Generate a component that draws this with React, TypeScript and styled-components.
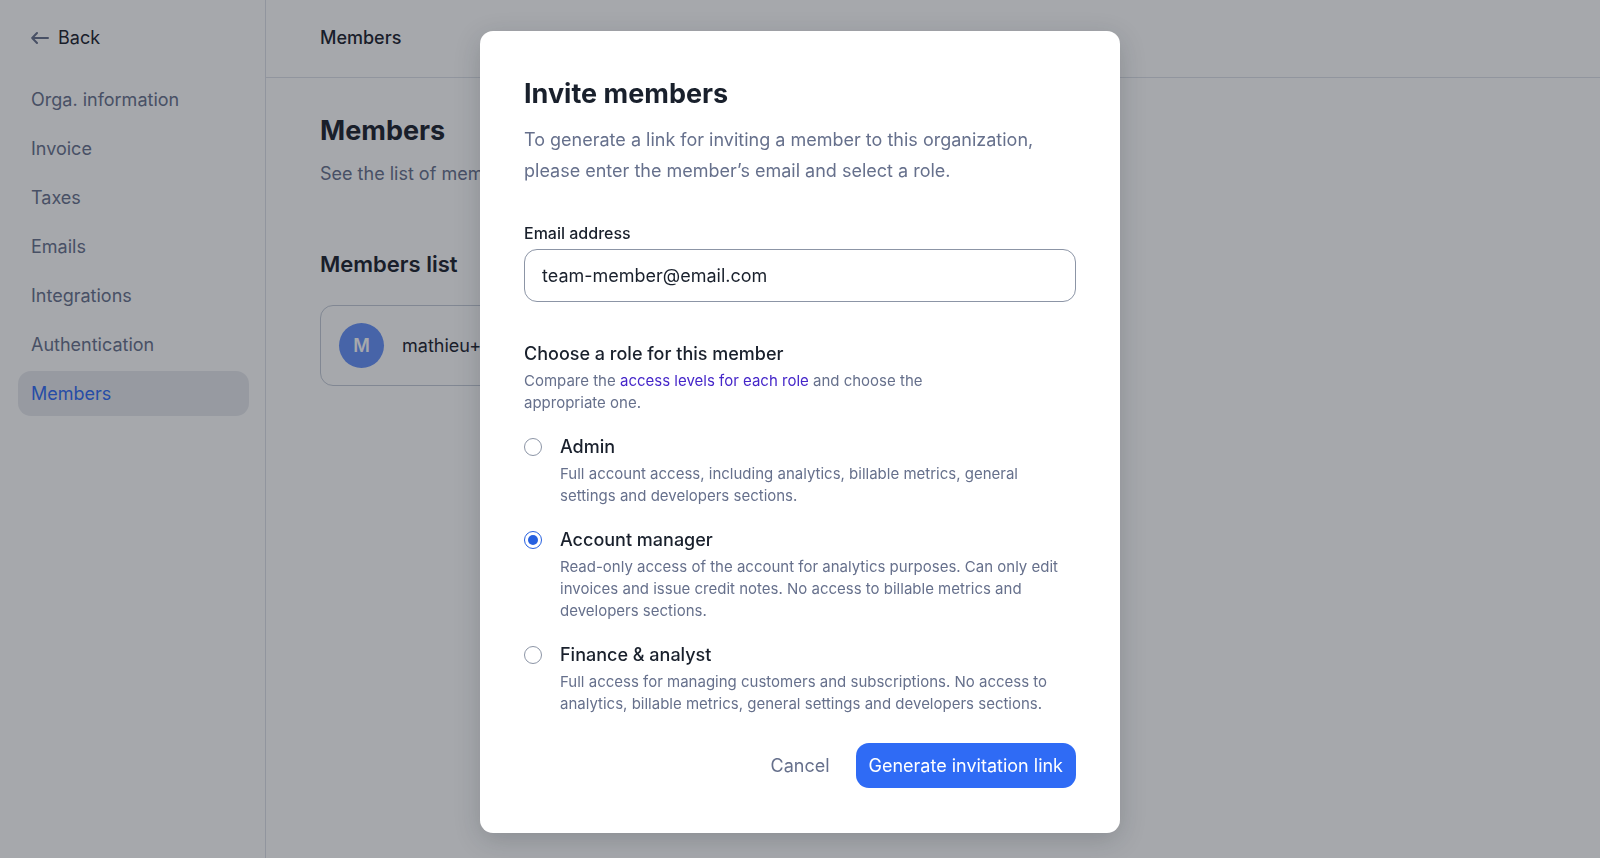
import React, { useState } from 'react';
import styled, { createGlobalStyle } from 'styled-components';

const color = {
  ink: '#19202c',
  muted: '#66708c',
  blue: '#2f6bf5',
  radio: '#2660e0',
  link: '#4526c9',
  line: '#dde1e8',
  field: '#8c95a6',
};

const GlobalStyle = createGlobalStyle`
  *, *::before, *::after { box-sizing: border-box; }
  body {
    margin: 0;
    background: #fff;
    color: ${color.ink};
    font-family: Inter, "Liberation Sans", sans-serif;
    font-size: 18px;
    line-height: 27px;
    -webkit-font-smoothing: antialiased;
  }
  h1, h2, p, ul, fieldset, legend { margin: 0; padding: 0; border: 0; }
  button, input { font: inherit; color: inherit; }
`;

const Page = styled.div`
  display: flex;
  min-height: 100vh;
`;

const Sidebar = styled.aside`
  flex: 0 0 266px;
  border-right: 1px solid ${color.line};
  padding: 0 16px 18px 18px;
`;

const BackBar = styled.div`
  display: flex;
  align-items: center;
  height: 77px;
  padding: 0 13px 2px;
`;

const BackButton = styled.button`
  display: flex;
  align-items: center;
  gap: 9px;
  padding: 0;
  border: 0;
  background: none;
`;

const NavList = styled.ul`
  display: flex;
  flex-direction: column;
  gap: 4px;
  list-style: none;
`;

const NavLink = styled.a<{ $active?: boolean }>`
  display: block;
  padding: 9px 13px;
  border-radius: 13px;
  text-decoration: none;
  color: ${(p) => (p.$active ? color.blue : color.muted)};
  background: ${(p) => (p.$active ? '#e7e9ee' : 'transparent')};
`;

const Main = styled.main`
  flex: 1;
  min-width: 0;
`;

const TopBar = styled.header`
  display: flex;
  align-items: center;
  height: 78px;
  padding: 0 54px 2px;
  border-bottom: 1px solid ${color.line};
  font-weight: 500;
`;

const Content = styled.div`
  max-width: 908px;
  padding: 35px 54px;
`;

const Title = styled.h1`
  font-size: 27px;
  line-height: 36px;
  font-weight: 700;
`;

const PageLead = styled.p`
  margin-top: 11px;
  color: ${color.muted};
`;

const SectionTitle = styled.h2`
  margin: 62px 0 25px;
  font-size: 22px;
  line-height: 31px;
  font-weight: 600;
`;

const MemberCard = styled.div`
  display: flex;
  align-items: center;
  gap: 18px;
  padding: 17px 18px;
  border: 1px solid #c3cad6;
  border-radius: 13px;
`;

const Avatar = styled.span`
  display: grid;
  place-items: center;
  width: 45px;
  height: 45px;
  border-radius: 50%;
  background: #6490f8;
  color: #fff;
  font-weight: 600;
`;

const Backdrop = styled.div`
  position: fixed;
  inset: 0;
  display: flex;
  align-items: flex-start;
  justify-content: center;
  padding: 31px 18px 18px;
  overflow: auto;
  background: rgba(25, 30, 40, 0.39);
`;

const Dialog = styled.section`
  width: 100%;
  max-width: 640px;
  padding: 45px 44px;
  border-radius: 13px;
  background: #fff;
  box-shadow: 0 7px 27px rgba(25, 33, 46, 0.2);
`;

const DialogLead = styled.p`
  margin-top: 12px;
  line-height: 31px;
  color: ${color.muted};
`;

const FieldLabel = styled.label`
  display: block;
  margin-top: 36px;
  font-size: 16px;
  line-height: 22px;
  font-weight: 500;
`;

const TextField = styled.input`
  display: block;
  width: 100%;
  height: 53px;
  margin-top: 5px;
  padding: 0 17px;
  border: 1px solid ${color.field};
  border-radius: 13px;
  background: #fff;
  outline: none;
`;

const RoleGroup = styled.fieldset`
  margin-top: 38px;
  min-width: 0;
`;

const RoleLegend = styled.legend`
  font-weight: 500;
`;

const Hint = styled.p`
  margin-top: 3px;
  font-size: 15px;
  line-height: 22px;
  color: ${color.muted};
`;

const GroupHint = styled(Hint)`
  max-width: 450px;
`;

const InlineLink = styled.a`
  color: ${color.link};
  text-decoration: none;
`;

const RoleRow = styled.div`
  display: grid;
  grid-template-columns: 18px 1fr;
  column-gap: 18px;
  margin-top: 19px;
`;

const Radio = styled.input`
  appearance: none;
  display: grid;
  place-items: center;
  width: 18px;
  height: 18px;
  margin: 5px 0 0;
  border: 1px solid ${color.field};
  border-radius: 50%;
  background: #fff;

  &:checked {
    border-color: ${color.radio};
  }
  &:checked::before {
    content: '';
    width: 10px;
    height: 10px;
    border-radius: 50%;
    background: ${color.radio};
  }
`;

const RoleName = styled.label`
  display: block;
  font-weight: 500;
`;

const Actions = styled.div`
  display: flex;
  justify-content: flex-end;
  gap: 13px;
  margin-top: 28px;
`;

const Button = styled.button<{ $primary?: boolean }>`
  padding: 9px 13px;
  border: 0;
  border-radius: 13px;
  background: ${(p) => (p.$primary ? color.blue : 'transparent')};
  color: ${(p) => (p.$primary ? '#fff' : color.muted)};
`;

const navItems = [
  'Orga. information',
  'Invoice',
  'Taxes',
  'Emails',
  'Integrations',
  'Authentication',
  'Members',
];

const roles = [
  {
    id: 'admin',
    name: 'Admin',
    text: 'Full account access, including analytics, billable metrics, general settings and developers sections.',
  },
  {
    id: 'manager',
    name: 'Account manager',
    text: 'Read-only access of the account for analytics purposes. Can only edit invoices and issue credit notes. No access to billable metrics and developers sections.',
  },
  {
    id: 'finance',
    name: 'Finance & analyst',
    text: 'Full access for managing customers and subscriptions. No access to analytics, billable metrics, general settings and developers sections.',
  },
];

function BackArrow() {
  return (
    <svg width="18" height="18" viewBox="0 0 18 18" fill="none" stroke={color.muted} strokeWidth="2" strokeLinecap="round" strokeLinejoin="round" aria-hidden="true">
      <path d="M17 9H1.6M6 4L1.2 9L6 14" />
    </svg>
  );
}

export default function App() {
  const [role, setRole] = useState('manager');
  const [email, setEmail] = useState('team-member@email.com');

  return (
    <>
      <GlobalStyle />
      <Page>
        <Sidebar>
          <BackBar>
            <BackButton type="button">
              <BackArrow />
              Back
            </BackButton>
          </BackBar>
          <nav>
            <NavList>
              {navItems.map((item) => (
                <li key={item}>
                  <NavLink href="#" $active={item === 'Members'}>
                    {item}
                  </NavLink>
                </li>
              ))}
            </NavList>
          </nav>
        </Sidebar>
        <Main>
          <TopBar>Members</TopBar>
          <Content>
            <Title>Members</Title>
            <PageLead>See the list of members</PageLead>
            <SectionTitle>Members list</SectionTitle>
            <MemberCard>
              <Avatar>M</Avatar>
              mathieu+
            </MemberCard>
          </Content>
        </Main>
      </Page>
      <Backdrop>
        <Dialog role="dialog" aria-modal="true" aria-labelledby="invite-title">
          <Title as="h2" id="invite-title">
            Invite members
          </Title>
          <DialogLead>
            To generate a link for inviting a member to this organization, please enter the member’s email and select a role.
          </DialogLead>
          <FieldLabel htmlFor="email">Email address</FieldLabel>
          <TextField id="email" type="email" value={email} onChange={(e) => setEmail(e.target.value)} />
          <RoleGroup>
            <RoleLegend>Choose a role for this member</RoleLegend>
            <GroupHint>
              Compare the <InlineLink href="#">access levels for each role</InlineLink> and choose the appropriate one.
            </GroupHint>
            {roles.map((r) => (
              <RoleRow key={r.id}>
                <Radio type="radio" name="role" id={r.id} checked={role === r.id} onChange={() => setRole(r.id)} />
                <div>
                  <RoleName htmlFor={r.id}>{r.name}</RoleName>
                  <Hint>{r.text}</Hint>
                </div>
              </RoleRow>
            ))}
          </RoleGroup>
          <Actions>
            <Button type="button">Cancel</Button>
            <Button type="button" $primary>
              Generate invitation link
            </Button>
          </Actions>
        </Dialog>
      </Backdrop>
    </>
  );
}
